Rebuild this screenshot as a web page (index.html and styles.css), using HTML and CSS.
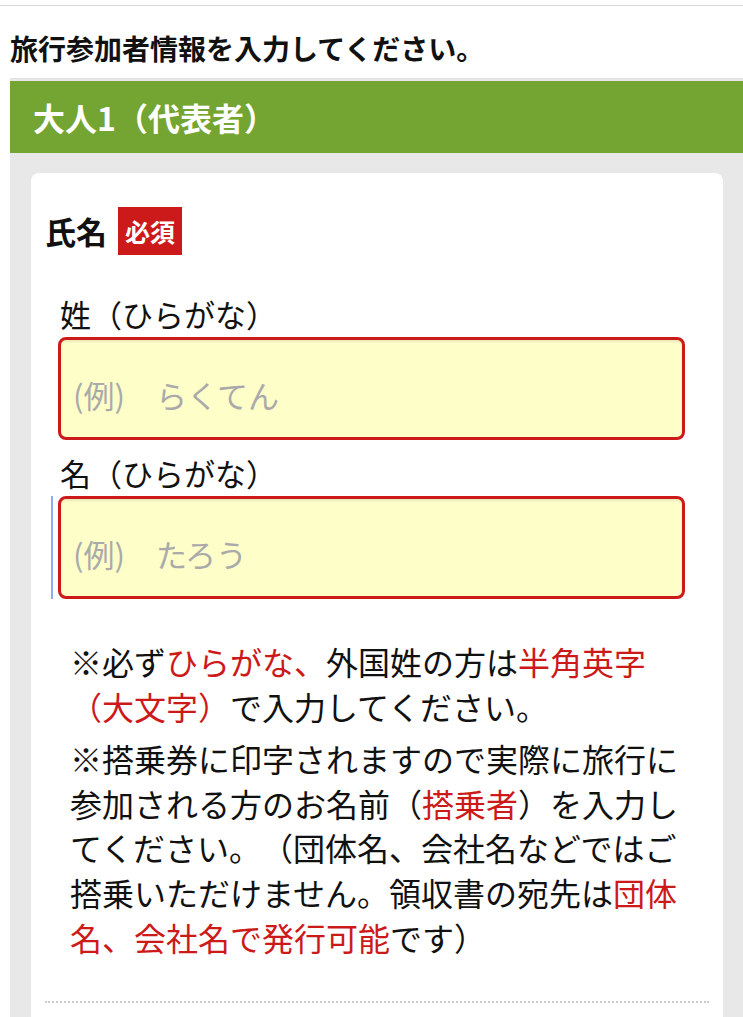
FILE: index.html
```html
<!DOCTYPE html>
<html lang="ja">
<head>
  <meta charset="UTF-8"/>
  <meta name="viewport" content="width=device-width, initial-scale=1"/>
  <title>旅行参加者情報</title>
  <link rel="stylesheet" href="styles.css">
</head>
<body>
  <div class="topbar"></div>

  <h1 class="page-title">旅行参加者情報を入力してください。</h1>

  <section class="traveler">
    <h2 class="traveler-head">大人1（代表者）</h2>

    <div class="card">
      <div class="field-title">
        <span>氏名</span>
        <span class="required">必須</span>
      </div>

      <div class="field">
        <label class="field-label" for="last-kana">姓（ひらがな）</label>
        <input type="text" id="last-kana" class="kana-input" placeholder="(例)　らくてん">
      </div>

      <div class="field">
        <label class="field-label" for="first-kana">名（ひらがな）</label>
        <div class="input-wrap is-focused">
          <input type="text" id="first-kana" class="kana-input" placeholder="(例)　たろう">
        </div>
      </div>

      <div class="notes">
        <p>※必ず<em>ひらがな、</em>外国姓の方は<em>半角英字（大文字）</em>で入力してください。</p>
        <p>※搭乗券に印字されますので実際に旅行に参加される方のお名前（<em>搭乗者</em>）を入力してください。（団体名、会社名などではご搭乗いただけません。領収書の宛先は<em>団体名、会社名で発行可能</em>です）</p>
      </div>

      <div class="divider"></div>
    </div>
  </section>
</body>
</html>
```

FILE: styles.css
```css
:root {
  --green: #74a532;
  --red: #cc1a1a;
  --grey-bg: #e8e8e8;
  --text: #111;
}

body {
  margin: 0;
  background: #fff;
  color: var(--text);
  font-family: "Noto Sans CJK JP", "Noto Sans", sans-serif;
  text-spacing-trim: space-all;
}

.topbar {
  height: 5px;
  border-bottom: 1px solid #d6d6d6;
}

.page-title {
  margin: 23px 0 10px 10px;
  font-size: 28px;
  line-height: 1.4;
  font-weight: bold;
}

.traveler {
  margin-left: 10px;
  padding-top: 2px;
  background: var(--grey-bg);
  border-top: 1px solid #e0e0e0;
}

.traveler-head {
  margin: 0;
  height: 72px;
  display: flex;
  align-items: center;
  padding-left: 23px;
  background: var(--green);
  color: #fff;
  font-size: 32px;
  font-weight: bold;
}

.card {
  margin: 20px 20px 0 21px;
  padding: 34px 14px 20px;
  background: #fff;
  border-radius: 8px;
}

.field-title {
  display: flex;
  align-items: center;
  gap: 11px;
  font-size: 31px;
  font-weight: bold;
  line-height: 48px;
}

.required {
  background: var(--red);
  color: #fff;
  font-size: 25px;
  padding: 0 7px;
  height: 48px;
  line-height: 48px;
}

.field {
  margin: 0 24px 0 13px;
}

.field + .field {
  margin-top: 12px;
}

.field-title + .field {
  margin-top: 38px;
}

.field-label {
  display: block;
  padding-left: 2px;
  margin-bottom: 2px;
  font-size: 31px;
  line-height: 42px;
}

.kana-input {
  display: block;
  width: 100%;
  height: 103px;
  box-sizing: border-box;
  padding: 12px 12px 0;
  border: 3px solid var(--red);
  border-radius: 8px;
  background: #fefec9;
  box-shadow: inset 0 2px 2px rgba(0, 0, 0, 0.08);
  font-family: inherit;
  font-size: 31px;
  color: var(--text);
  outline: none;
}

.kana-input::placeholder {
  color: #aaa;
}

.input-wrap.is-focused {
  margin-left: -7px;
  padding-left: 5px;
  border-left: 2px solid #8eacef;
}

.notes {
  margin: 40px 20px 0 25px;
  font-size: 32px;
  line-height: 1.4;
}

.notes p {
  margin: 0;
}

.notes p + p {
  margin-top: 7px;
}

.notes em {
  font-style: normal;
  color: var(--red);
}

.divider {
  margin-top: 41px;
  border-top: 2px dotted #ccc;
}
```
